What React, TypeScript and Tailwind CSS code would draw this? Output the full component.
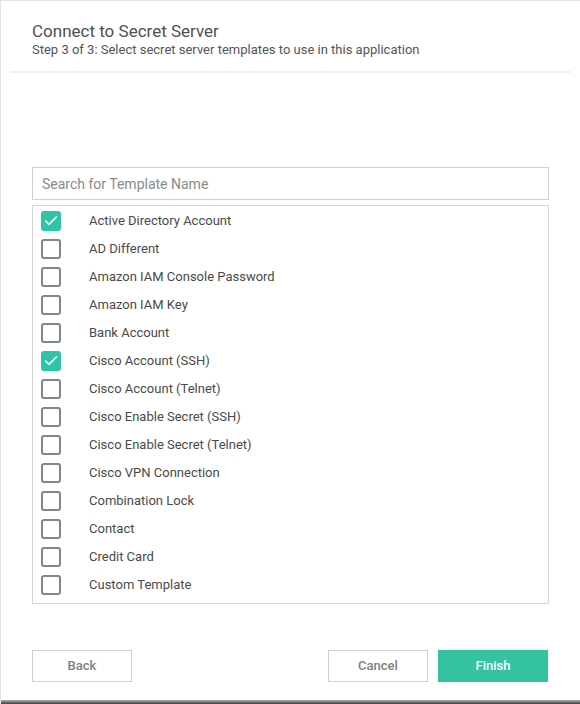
import { Check } from 'lucide-react'

const templates = [
  { name: 'Active Directory Account', checked: true },
  { name: 'AD Different', checked: false },
  { name: 'Amazon IAM Console Password', checked: false },
  { name: 'Amazon IAM Key', checked: false },
  { name: 'Bank Account', checked: false },
  { name: 'Cisco Account (SSH)', checked: true },
  { name: 'Cisco Account (Telnet)', checked: false },
  { name: 'Cisco Enable Secret (SSH)', checked: false },
  { name: 'Cisco Enable Secret (Telnet)', checked: false },
  { name: 'Cisco VPN Connection', checked: false },
  { name: 'Combination Lock', checked: false },
  { name: 'Contact', checked: false },
  { name: 'Credit Card', checked: false },
  { name: 'Custom Template', checked: false },
  { name: '', checked: false },
]

export default function App() {
  return (
    <div
      className="w-[580px] h-[704px] flex flex-col bg-white border-t border-l border-[#e3e3e3]"
      style={{ fontFamily: 'Roboto, "Liberation Sans", sans-serif' }}
    >
      {/* Header */}
      <div className="px-[31px] pt-[20px] pb-[13px]">
        <h1 className="text-[17px] leading-[21px] text-[#505050]">Connect to Secret Server</h1>
        <p className="text-[13px] leading-[16px] text-[#555]">
          Step 3 of 3: Select secret server templates to use in this application
        </p>
      </div>
      <div className="mx-[9px] h-[2px] bg-[#eef1f1]" />

      {/* Body */}
      <div className="flex-1 px-[31px] pt-[94px]">
        <input
          type="text"
          placeholder="Search for Template Name"
          className="w-full h-[33px] px-[9px] border border-[#cfcfcf] text-[14px] text-[#444] placeholder:text-[#8a8a8a] outline-none"
        />
        <div className="mt-[5px] h-[399px] pt-[1px] border border-[#d6d6d6] overflow-hidden">
          {templates.map((t, i) => (
            <div key={i} className="flex items-center h-[28px]">
              <div className="w-[56px] flex pl-[8px]">
                {t.checked ? (
                  <div className="w-[20px] h-[20px] rounded-[3px] bg-[#2ec4a6] flex items-center justify-center">
                    <Check className="w-[16px] h-[16px] text-white" strokeWidth={2.5} />
                  </div>
                ) : (
                  <div className="w-[20px] h-[20px] rounded-[3px] border-2 border-[#7d8790]" />
                )}
              </div>
              {t.name && <span className="text-[13px] text-[#4a4a4a]">{t.name}</span>}
            </div>
          ))}
        </div>
      </div>

      {/* Footer */}
      <div className="flex items-center pl-[31px] pr-[32px] pb-[18px]">
        <button className="w-[100px] h-[32px] border border-[#cfcfcf] text-[13px] font-medium text-[#808080]">
          Back
        </button>
        <div className="flex-1" />
        <button className="w-[100px] h-[32px] border border-[#cfcfcf] text-[13px] font-medium text-[#808080]">
          Cancel
        </button>
        <button className="ml-[10px] w-[110px] h-[32px] bg-[#33c3a2] text-[13px] font-medium text-white">
          Finish
        </button>
      </div>
      <div className="h-[4px] bg-gradient-to-b from-[#b5b5b5] to-[#3e3e3e]" />
    </div>
  )
}
